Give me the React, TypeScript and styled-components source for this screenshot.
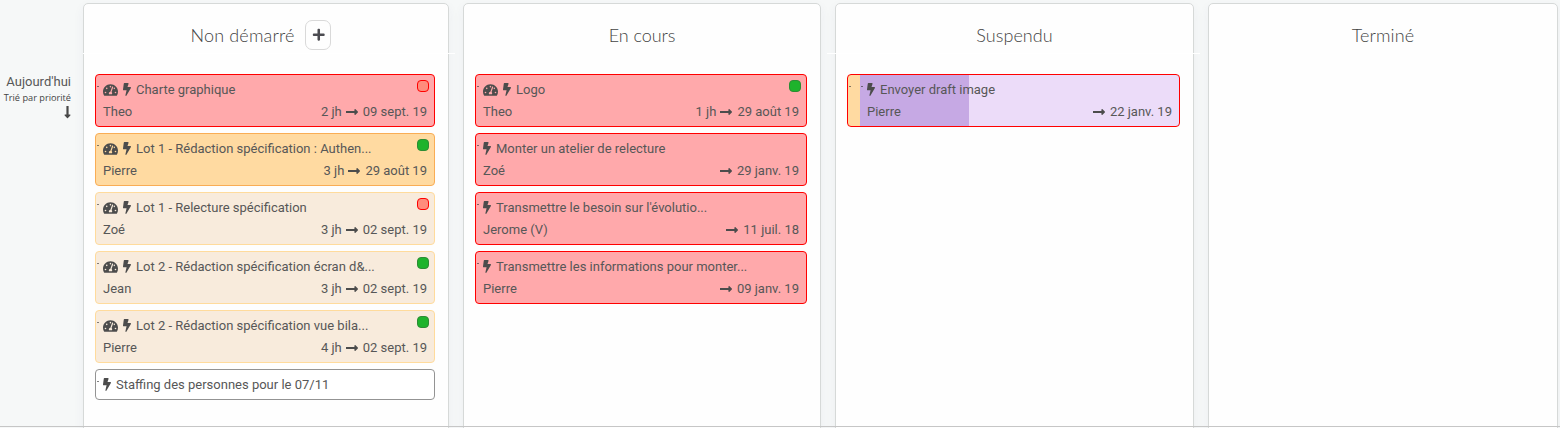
import React from "react";
import styled, { createGlobalStyle } from "styled-components";
import { FaBolt, FaLongArrowAltDown, FaLongArrowAltRight, FaPlus, FaTachometerAlt } from "react-icons/fa";

const GlobalStyle = createGlobalStyle`
  * { box-sizing: border-box; }
  body {
    margin: 0;
    overflow: hidden;
    background: #f6f8f8;
    color: #575757;
    font: 13px/22px Roboto, "Liberation Sans", sans-serif;
  }
`;

const Board = styled.main`
  position: relative;
  display: flex;
  height: 428px;
  padding-top: 3px;
  overflow: hidden;
`;

const BottomRule = styled.div`
  position: absolute;
  left: 0;
  right: 0;
  top: 426px;
  height: 1px;
  background: #c6c6c6;
`;

const Side = styled.aside`
  width: 83px;
  flex: none;
  padding: 71px 12px 0 0;
  display: flex;
  flex-direction: column;
  align-items: flex-end;
  white-space: nowrap;
`;

const SideTitle = styled.div`
  line-height: 16px;
`;

const SideNote = styled.div`
  font: 9.2px/16px "Open Sans", "Noto Sans", sans-serif;
  color: #444;
`;

const SideArrow = styled(FaLongArrowAltDown)`
  width: 7px;
  height: 14px;
  margin-top: -1px;
  color: #484848;
`;

const Columns = styled.div`
  display: flex;
  gap: 14px;
`;

const Column = styled.section<{ $width: number }>`
  position: relative;
  width: ${(p) => p.$width}px;
  flex: none;
  height: 440px;
  padding: 0 13px 0 11px;
  background: #fefefe;
  border: 1px solid #d6d9d8;
  border-radius: 5px;
  box-shadow: 0 4px 12px rgba(50, 50, 110, 0.05);
`;

const HeaderRule = styled.div<{ $start: number }>`
  position: absolute;
  left: ${(p) => p.$start}px;
  right: -7px;
  top: 49px;
  height: 1px;
  background: #fff;
`;

const ColumnHeader = styled.header`
  display: flex;
  align-items: center;
  justify-content: center;
  gap: 11px;
  height: 62px;
  margin: 0 -2px 8px 0;
`;

const ColumnTitle = styled.h2<{ $spacing: number }>`
  margin: 0;
  font: 300 18px/22px Lato, "Open Sans", sans-serif;
  letter-spacing: ${(p) => p.$spacing}px;
  color: #444;
`;

const AddButton = styled.button`
  display: flex;
  align-items: center;
  justify-content: center;
  width: 26px;
  height: 30px;
  margin-right: 10px;
  padding: 0;
  background: #fefefe;
  border: 1px solid #d9d9d9;
  border-radius: 7px;
  color: #4b4b50;
  font-size: 13.5px;
`;

const CardList = styled.div`
  display: flex;
  flex-direction: column;
  gap: 6px;
`;

type Tone = "late" | "today" | "soon" | "plain" | "progress";

const tones: Record<Tone, { fill: string; edge: string }> = {
  late: { fill: "#ffa9ab", edge: "#ff0000" },
  today: { fill: "#ffdaa1", edge: "#f9ad55" },
  soon: { fill: "#f8ebdc", edge: "#ffdb9c" },
  plain: { fill: "#ffffff", edge: "#939393" },
  progress: {
    fill: "linear-gradient(90deg, #ffdaa1 12px, #c6a9e4 12px, #c6a9e4 121px, #ecdcf9 121px)",
    edge: "#ff0000",
  },
};

const CardBox = styled.article<{ $tone: Tone }>`
  position: relative;
  height: ${(p) => (p.$tone === "plain" ? 31 : 53)}px;
  padding: 4px 7px 0 ${(p) => (p.$tone === "progress" ? 19 : 7)}px;
  background: ${(p) => tones[p.$tone].fill};
  border: 1px solid ${(p) => tones[p.$tone].edge};
  border-radius: 4px;
  white-space: nowrap;
`;

const Handle = styled.i<{ $left: number }>`
  position: absolute;
  left: ${(p) => p.$left}px;
  top: 11px;
  width: 2px;
  height: 1px;
  background: rgba(60, 60, 60, 0.65);
`;

const TitleRow = styled.div`
  display: flex;
  align-items: center;
  height: 22px;
`;

const MetaRow = styled.div`
  display: flex;
  align-items: center;
  justify-content: space-between;
  height: 22px;
`;

const Due = styled.span`
  display: flex;
  align-items: center;
`;

const GaugeIcon = styled(FaTachometerAlt)`
  width: 15px;
  height: 14px;
  margin: 0 5px 1px 0;
  color: #4c4c4c;
`;

const BoltIcon = styled(FaBolt)`
  width: 8px;
  height: 13px;
  margin: 0 5px 1px 0;
  color: #4c4c4c;
`;

const ArrowIcon = styled(FaLongArrowAltRight)`
  width: 12px;
  height: 14px;
  margin: 0 5px 0 4px;
  color: #4c4c4c;
`;

const Status = styled.span<{ $ok: boolean }>`
  position: absolute;
  top: 5px;
  right: 5px;
  width: 12px;
  height: 12px;
  border-radius: 4px;
  background: ${(p) => (p.$ok ? "#1eb32c" : "#ff8c7c")};
  border: 1px solid ${(p) => (p.$ok ? "#2d8c35" : "#ff0000")};
`;

interface Task {
  title: string;
  tone: Tone;
  who?: string;
  load?: string;
  due?: string;
  status?: "ok" | "ko";
}

interface Lane {
  name: string;
  width: number;
  spacing: number;
  canAdd?: boolean;
  rule?: number;
  tasks: Task[];
}

const lanes: Lane[] = [
  {
    name: "Non démarré",
    width: 366,
    spacing: 0.15,
    canAdd: true,
    rule: -1,
    tasks: [
      { title: "Charte graphique", tone: "late", who: "Theo", load: "2 jh", due: "09 sept. 19", status: "ko" },
      { title: "Lot 1 - Rédaction spécification : Authen...", tone: "today", who: "Pierre", load: "3 jh", due: "29 août 19", status: "ok" },
      { title: "Lot 1 - Relecture spécification", tone: "soon", who: "Zoé", load: "3 jh", due: "02 sept. 19", status: "ko" },
      { title: "Lot 2 - Rédaction spécification écran d&...", tone: "soon", who: "Jean", load: "3 jh", due: "02 sept. 19", status: "ok" },
      { title: "Lot 2 - Rédaction spécification vue bila...", tone: "soon", who: "Pierre", load: "4 jh", due: "02 sept. 19", status: "ok" },
      { title: "Staffing des personnes pour le 07/11", tone: "plain" },
    ],
  },
  {
    name: "En cours",
    width: 358,
    spacing: -0.05,
    tasks: [
      { title: "Logo", tone: "late", who: "Theo", load: "1 jh", due: "29 août 19", status: "ok" },
      { title: "Monter un atelier de relecture", tone: "late", who: "Zoé", due: "29 janv. 19" },
      { title: "Transmettre le besoin sur l'évolutio...", tone: "late", who: "Jerome (V)", due: "11 juil. 18" },
      { title: "Transmettre les informations pour monter...", tone: "late", who: "Pierre", due: "09 janv. 19" },
    ],
  },
  {
    name: "Suspendu",
    width: 359,
    spacing: 0.05,
    rule: -9,
    tasks: [{ title: "Envoyer draft image", tone: "progress", who: "Pierre", due: "22 janv. 19" }],
  },
  { name: "Terminé", width: 350, spacing: 0.1, tasks: [] },
];

function Card({ task }: { task: Task }) {
  return (
    <CardBox $tone={task.tone}>
      <Handle $left={1} />
      {task.tone === "progress" && <Handle $left={13} />}
      <TitleRow>
        {task.status && <GaugeIcon />}
        <BoltIcon />
        {task.title}
      </TitleRow>
      {task.who && (
        <MetaRow>
          <span>{task.who}</span>
          <Due>
            {task.load}
            <ArrowIcon />
            {task.due}
          </Due>
        </MetaRow>
      )}
      {task.status && <Status $ok={task.status === "ok"} />}
    </CardBox>
  );
}

export default function App() {
  return (
    <Board>
      <GlobalStyle />
      <Side>
        <SideTitle>Aujourd'hui</SideTitle>
        <SideNote>Trié par priorité</SideNote>
        <SideArrow />
      </Side>
      <Columns>
        {lanes.map((lane) => (
          <Column key={lane.name} $width={lane.width}>
            {lane.rule !== undefined && <HeaderRule $start={lane.rule} />}
            <ColumnHeader>
              <ColumnTitle $spacing={lane.spacing}>{lane.name}</ColumnTitle>
              {lane.canAdd && (
                <AddButton>
                  <FaPlus />
                </AddButton>
              )}
            </ColumnHeader>
            <CardList>
              {lane.tasks.map((task) => (
                <Card key={task.title} task={task} />
              ))}
            </CardList>
          </Column>
        ))}
      </Columns>
      <BottomRule />
    </Board>
  );
}
